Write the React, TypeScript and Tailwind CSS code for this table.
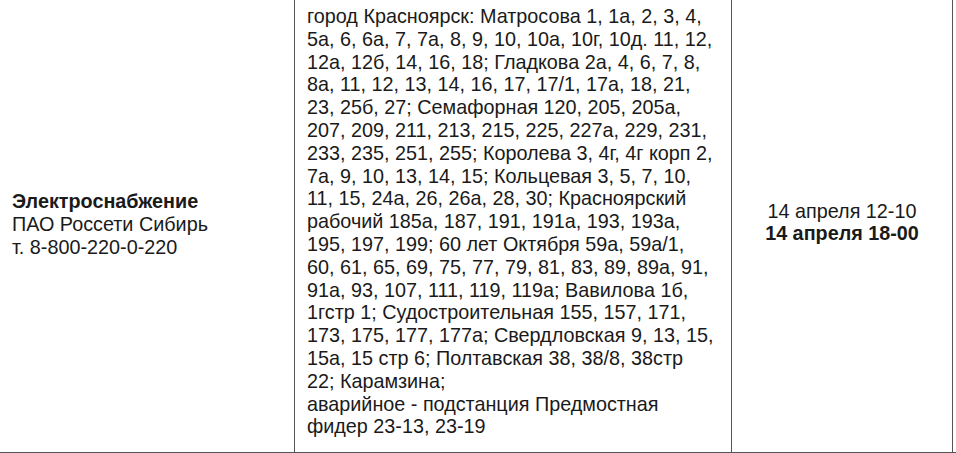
export default function App() {
  const lines = [
    "город Красноярск: Матросова 1, 1а, 2, 3, 4,",
    "5а, 6, 6а, 7, 7а, 8, 9, 10, 10а, 10г, 10д. 11, 12,",
    "12а, 12б, 14, 16, 18; Гладкова 2а, 4, 6, 7, 8,",
    "8а, 11, 12, 13, 14, 16, 17, 17/1, 17а, 18, 21,",
    "23, 25б, 27; Семафорная 120, 205, 205а,",
    "207, 209, 211, 213, 215, 225, 227а, 229, 231,",
    "233, 235, 251, 255; Королева 3, 4г, 4г корп 2,",
    "7а, 9, 10, 13, 14, 15; Кольцевая 3, 5, 7, 10,",
    "11, 15, 24а, 26, 26а, 28, 30; Красноярский",
    "рабочий 185а, 187, 191, 191а, 193, 193а,",
    "195, 197, 199; 60 лет Октября 59а, 59а/1,",
    "60, 61, 65, 69, 75, 77, 79, 81, 83, 89, 89а, 91,",
    "91а, 93, 107, 111, 119, 119а; Вавилова 1б,",
    "1гстр 1; Судостроительная 155, 157, 171,",
    "173, 175, 177, 177а; Свердловская 9, 13, 15,",
    "15а, 15 стр 6; Полтавская 38, 38/8, 38стр",
    "22; Карамзина;",
    "аварийное - подстанция Предмостная",
    "фидер 23-13, 23-19",
  ];
  return (
    <div className="w-[956px] h-[453px] bg-white overflow-hidden text-[#1a1a1a] font-['Liberation_Sans',Arial,sans-serif] text-[19.8px] leading-[22.8px]">
      <div className="grid grid-cols-[295px_437px_221px] h-[453px] border-b-[1.5px] border-[#555]">
        <div className="flex flex-col justify-center pl-[12px] pb-[3px] border-r-[1.5px] border-[#555]">
          <div className="font-bold">Электроснабжение</div>
          <div>ПАО Россети Сибирь</div>
          <div>т. 8-800-220-0-220</div>
        </div>
        <div className="pl-[12px] pt-[5px] border-r-[1.5px] border-[#555] whitespace-nowrap">
          {lines.map((l, i) => (
            <div key={i}>{l}</div>
          ))}
        </div>
        <div className="flex flex-col justify-center items-center text-center leading-[21.5px] border-r-[1.5px] border-[#555] pb-[7px]">
          <div>14 апреля 12-10</div>
          <div className="font-bold">14 апреля 18-00</div>
        </div>
      </div>
    </div>
  );
}
